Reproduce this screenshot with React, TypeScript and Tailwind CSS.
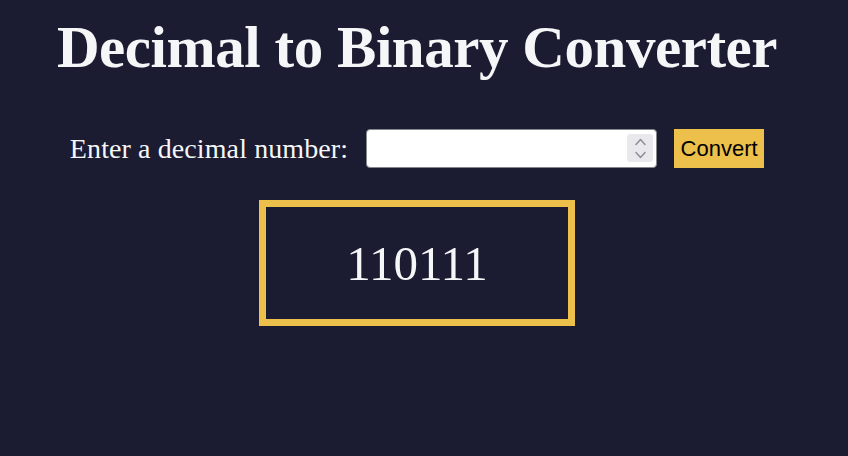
import React, { useState } from 'react';

const App: React.FC = () => {
  const [value, setValue] = useState('');
  const [result, setResult] = useState('110111');

  const handleConvert = () => {
    const n = parseInt(value, 10);
    if (!isNaN(n) && n >= 0) setResult(n.toString(2));
  };

  const step = (d: number) => {
    const n = parseInt(value || '0', 10) + d;
    setValue(String(n));
  };

  return (
    <div className="min-h-[456px] w-full bg-[#1b1b32] text-[#f5f6f7]" style={{ fontFamily: '"Liberation Serif", "Times New Roman", serif' }}>
      <div className="flex w-[834px] flex-col items-center">
        <h1 className="mt-[13px] text-[59px] font-bold leading-[68px] tracking-[-0.45px]">Decimal to Binary Converter</h1>

        <div className="mt-[48px] flex items-center">
          <label htmlFor="number-input" className="text-[28px] leading-[32px] tracking-[0.1px]">Enter a decimal number:</label>
          <div className="relative ml-[18px]">
            <input
              id="number-input"
              type="number"
              value={value}
              onChange={(e) => setValue(e.target.value)}
              className="block h-[39px] w-[291px] rounded-[4px] border border-[#85858c] bg-white px-2 text-[20px] text-black [appearance:textfield] [&::-webkit-inner-spin-button]:appearance-none [&::-webkit-outer-spin-button]:appearance-none"
            />
            {/* spin buttons as drawn by the reference browser */}
            <div className="absolute right-[4px] top-[5px] flex h-[28px] w-[26px] flex-col items-center justify-center gap-[2px] rounded-[3px] bg-[#e9e9ed]">
              <button type="button" onClick={() => step(1)} className="flex h-[11px] items-center">
                <svg width="13" height="8" viewBox="0 0 13 8" fill="none" stroke="#8e8e94" strokeWidth="1.5" strokeLinecap="round" strokeLinejoin="round">
                  <path d="M2 6.5 L6.5 1.5 L11 6.5" />
                </svg>
              </button>
              <button type="button" onClick={() => step(-1)} className="flex h-[11px] items-center">
                <svg width="13" height="8" viewBox="0 0 13 8" fill="none" stroke="#8e8e94" strokeWidth="1.5" strokeLinecap="round" strokeLinejoin="round">
                  <path d="M2 1.5 L6.5 6.5 L11 1.5" />
                </svg>
              </button>
            </div>
          </div>
          <button
            type="button"
            onClick={handleConvert}
            className="ml-[17px] h-[39px] w-[90px] bg-[#ecc04b] text-[22px] text-black"
            style={{ fontFamily: '"Liberation Sans", Arial, sans-serif' }}
          >
            Convert
          </button>
        </div>

        <div className="mt-[32px] flex h-[126px] w-[316px] items-center justify-center border-[7px] border-[#ecc04b]">
          <span className="text-[49px] leading-none">{result}</span>
        </div>
      </div>
    </div>
  );
};

export default App;
